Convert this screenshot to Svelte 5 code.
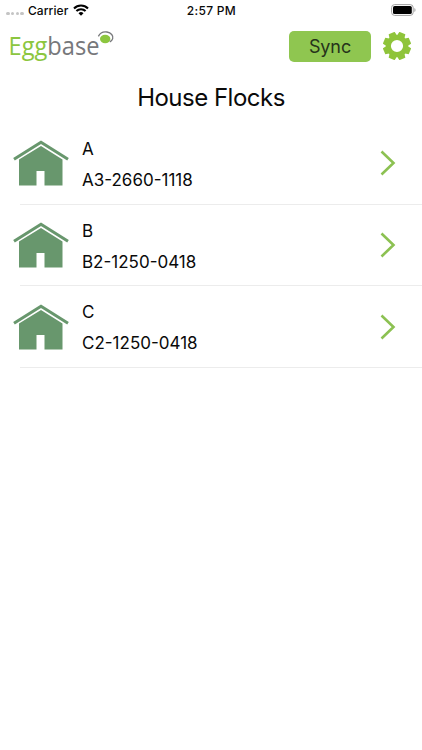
<script lang="ts">
	let carrier = "Carrier";
	let time = "2:57 PM";

	let flocks = [
		{ house: "A", code: "A3-2660-1118" },
		{ house: "B", code: "B2-1250-0418" },
		{ house: "C", code: "C2-1250-0418" },
	];

	const teeth = [22.5, 67.5, 112.5, 157.5, 202.5, 247.5, 292.5, 337.5];
</script>

<div class="screen">
	<div class="status">
		<div class="carrier">
			<span class="dots"><i></i><i></i><i></i><i></i></span>
			<span class="name">{carrier}</span>
			<svg class="wifi" viewBox="0 0 16 12" width="16" height="12">
				<path d="M1 4.4a10 10 0 0 1 14 0" />
				<path d="M3.4 7.1a6.6 6.6 0 0 1 9.2 0" />
				<path class="fill" d="M8 11.8 5.5 9.3a3.6 3.6 0 0 1 5 0z" />
			</svg>
		</div>
		<span class="time">{time}</span>
		<svg class="battery" viewBox="0 0 26 12" width="26" height="12">
			<rect class="shell" x="0.6" y="0.6" width="21.6" height="10.8" rx="3" />
			<rect x="2" y="2" width="18.8" height="8" rx="1.6" />
			<path class="cap" d="M23.4 4v4c1.5-.5 1.5-3.5 0-4z" />
		</svg>
	</div>

	<header>
		<svg class="logo" viewBox="0 0 106 36" width="106" height="36" aria-label="Eggbase">
			<text x="-0.5" y="26.5" textLength="91" lengthAdjust="spacingAndGlyphs"><tspan class="egg">Egg</tspan>base</text>
			<ellipse class="yolk" cx="96.2" cy="11" rx="5.2" ry="4.2" />
			<path class="white" d="M89.4 8.4C91 5 94 3.4 98 4c4.2.7 6.5 3.7 5.7 6.600-.4 1.500-1.400 2.500-2.900 3.300" />
		</svg>
		<button class="sync">Sync</button>
		<svg class="gear" viewBox="-14 -14 28 28" width="28" height="28">
			<circle r="8.6" />
			{#each teeth as angle}
				<path d="M-4.2-9 -3.2-14H3.2L4.2-9z" transform="rotate({angle})" />
			{/each}
		</svg>
	</header>

	<h1>House Flocks</h1>

	<ul>
		{#each flocks as flock}
			<li>
				<svg class="house" viewBox="0 0 56 46" width="56" height="46">
					<path class="roof" d="M1 19.3 28 2.3l27 17" />
					<path d="M6 19.5 28 6l21.5 13.5v26h-18V31h-8v14.500H6z" />
				</svg>
				<div class="info">
					<span>{flock.house}</span>
					<span>{flock.code}</span>
				</div>
				<svg class="chevron" viewBox="0 0 16 26" width="16" height="26">
					<path d="M1.5 1.5 13.5 13 1.5 24.5" />
				</svg>
			</li>
		{/each}
	</ul>
</div>

<style>
	:global(body) {
		background: #fff;
	}

	.screen {
		box-sizing: border-box;
		color: #0a0a0a;
		font-family: Inter, "Liberation Sans", sans-serif;
		height: 750px;
		overflow: hidden;
	}

	.status {
		align-items: center;
		display: grid;
		grid-template-columns: 1fr auto 1fr;
		font-size: 12px;
		font-weight: 500;
		height: 20px;
		padding: 0 5px 0 6px;
	}

	.carrier {
		align-items: center;
		display: flex;
	}

	.dots {
		display: flex;
		gap: 1.3px;
		margin: 7px 4px 0 0;
	}

	.dots i {
		background: #c4c4c4;
		border-radius: 50%;
		height: 3.5px;
		width: 3.5px;
	}

	.name {
		letter-spacing: 0.1px;
	}

	.wifi {
		fill: none;
		margin-left: 4px;
		stroke: #000;
		stroke-width: 2.1;
	}

	.wifi .fill {
		fill: #000;
		stroke: none;
	}

	.time {
		letter-spacing: 0.3px;
	}

	.battery {
		justify-self: end;
	}

	.battery .shell {
		fill: none;
		stroke: #a0a0a0;
	}

	.battery .cap {
		fill: #a0a0a0;
	}

	header {
		align-items: center;
		display: flex;
		height: 52px;
		padding: 0 11.5px 0 9px;
	}

	.logo {
		margin-right: auto;
	}

	.logo text {
		fill: #77787b;
		font-family: "Open Sans", "Noto Sans", sans-serif;
		font-size: 25px;
		font-weight: 400;
	}

	.logo .egg,
	.logo .yolk {
		fill: #8cc63f;
	}

	.logo .white {
		fill: none;
		stroke: #77787b;
		stroke-width: 1.3;
	}

	.sync {
		background: #8fc650;
		border: 0;
		border-radius: 5px;
		color: #26331b;
		font: 400 18px Inter, sans-serif;
		height: 31px;
		letter-spacing: -0.1px;
		margin-right: 11.5px;
		padding: 0;
		width: 82px;
	}

	.gear circle {
		fill: none;
		stroke: #8fc43a;
		stroke-width: 5;
	}

	.gear path {
		fill: #8fc43a;
	}

	h1 {
		font-size: 24px;
		font-weight: 400;
		letter-spacing: -0.5px;
		line-height: 30px;
		margin: 11px 0 10px;
		text-align: center;
	}

	ul {
		list-style: none;
		margin: 0;
		padding: 0 0 0 20px;
	}

	li {
		align-items: center;
		border-bottom: 1.5px solid #ececec;
		box-sizing: border-box;
		display: flex;
		height: 81.7px;
		padding-right: 26px;
	}

	.house {
		fill: #68976d;
		margin: 0 13px 0 -7px;
	}

	.house .roof {
		fill: none;
		stroke: #68976d;
		stroke-width: 3;
	}

	.info {
		display: flex;
		flex: 1;
		flex-direction: column;
		font-size: 17px;
		gap: 9px;
		line-height: 22px;
		padding-top: 2px;
	}

	.chevron {
		fill: none;
		stroke: #8cc152;
		stroke-width: 2.6;
	}
</style>
